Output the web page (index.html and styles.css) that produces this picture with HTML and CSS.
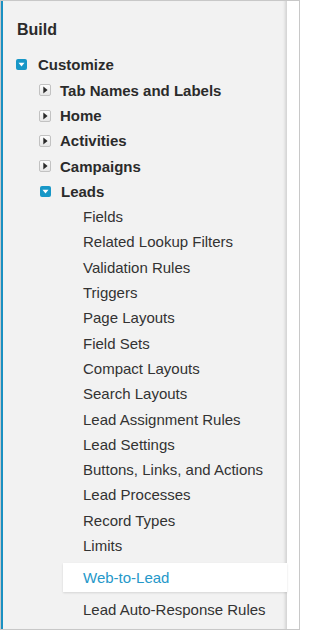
FILE: index.html
```html
<!DOCTYPE html>
<html>
<head>
<meta charset="utf-8">
<link rel="stylesheet" href="styles.css">
</head>
<body>
<div class="frame">
  <nav class="panel">
    <h2 class="title">Build</h2>
    <ul class="tree">
      <li class="node lvl1"><span class="tog open"><svg viewBox="0 0 11 11" width="11" height="11"><path d="M2.5 3.8 L8.5 3.8 L5.5 7.6 Z" fill="#fff"/></svg></span><span>Customize</span></li>
      <li class="node lvl2"><span class="tog closed"><svg viewBox="0 0 12 12" width="12" height="12"><path d="M4.3 2.6 L4.3 9.4 L8.6 6 Z" fill="#2a2a2a"/></svg></span><span>Tab Names and Labels</span></li>
      <li class="node lvl2"><span class="tog closed"><svg viewBox="0 0 12 12" width="12" height="12"><path d="M4.3 2.6 L4.3 9.4 L8.6 6 Z" fill="#2a2a2a"/></svg></span><span>Home</span></li>
      <li class="node lvl2"><span class="tog closed"><svg viewBox="0 0 12 12" width="12" height="12"><path d="M4.3 2.6 L4.3 9.4 L8.6 6 Z" fill="#2a2a2a"/></svg></span><span>Activities</span></li>
      <li class="node lvl2"><span class="tog closed"><svg viewBox="0 0 12 12" width="12" height="12"><path d="M4.3 2.6 L4.3 9.4 L8.6 6 Z" fill="#2a2a2a"/></svg></span><span>Campaigns</span></li>
      <li class="node lvl2"><span class="tog open"><svg viewBox="0 0 11 11" width="11" height="11"><path d="M2.5 3.8 L8.5 3.8 L5.5 7.6 Z" fill="#fff"/></svg></span><span>Leads</span></li>
      <li class="leaf">Fields</li>
      <li class="leaf">Related Lookup Filters</li>
      <li class="leaf">Validation Rules</li>
      <li class="leaf">Triggers</li>
      <li class="leaf">Page Layouts</li>
      <li class="leaf">Field Sets</li>
      <li class="leaf">Compact Layouts</li>
      <li class="leaf">Search Layouts</li>
      <li class="leaf">Lead Assignment Rules</li>
      <li class="leaf">Lead Settings</li>
      <li class="leaf">Buttons, Links, and Actions</li>
      <li class="leaf">Lead Processes</li>
      <li class="leaf">Record Types</li>
      <li class="leaf">Limits</li>
      <li class="leaf active">Web-to-Lead</li>
      <li class="leaf after">Lead Auto-Response Rules</li>
    </ul>
  </nav>
</div>
</body>
</html>
```
FILE: styles.css
```css
html, body {
  margin: 0;
  padding: 0;
  background: #fff;
}
.frame {
  width: 300px;
  height: 630px;
  box-sizing: border-box;
  border: 1px solid #c8c8c8;
  background: #fff;
  display: flex;
  overflow: hidden;
  font-family: "Liberation Sans", Arial, sans-serif;
}
.panel {
  width: 284px;
  flex: none;
  border-left: 2px solid #1a90c2;
  background: #f2f2f2;
  box-shadow: inset -4px 0 3px -2px rgba(0, 0, 0, 0.13);
}
.title {
  margin: 0 0 11.35px 0;
  padding: 18px 0 0 14px;
  font-size: 16px;
  line-height: 22px;
  font-weight: bold;
  color: #2b2b2b;
}
.tree {
  list-style: none;
  margin: 0;
  padding: 0;
}
.node {
  display: flex;
  align-items: center;
  height: 25.3px;
  font-size: 15px;
  font-weight: bold;
  color: #2b2b2b;
}
.lvl1 {
  padding-left: 13px;
  gap: 11px;
}
.lvl2 {
  padding-left: 36px;
  gap: 9px;
}
.lvl2 .tog.open {
  margin-left: 1px;
  margin-right: 1px;
}
.tog {
  display: flex;
  flex: none;
  box-sizing: border-box;
}
.tog svg {
  display: block;
}
.tog.open {
  width: 11px;
  height: 11px;
  background: #1797c7;
  border-radius: 2px;
}
.tog.closed {
  width: 12px;
  height: 12px;
  border: 1px solid #c2c2c2;
  border-radius: 2px;
  background: linear-gradient(#fdfdfd, #e6e6e6);
}
.tog.closed svg {
  margin: -1px;
}
.leaf {
  height: 25.3px;
  line-height: 25.3px;
  padding-left: 80px;
  font-size: 15px;
  color: #333;
  white-space: nowrap;
}
.leaf.active {
  margin: 4.65px 0 0 60px;
  padding-left: 20px;
  height: 29px;
  line-height: 29px;
  background: #fff;
  color: #2598c9;
  box-shadow: 0 1px 2px rgba(0, 0, 0, 0.12);
}
.leaf.after {
  margin-top: 4.85px;
}
```
